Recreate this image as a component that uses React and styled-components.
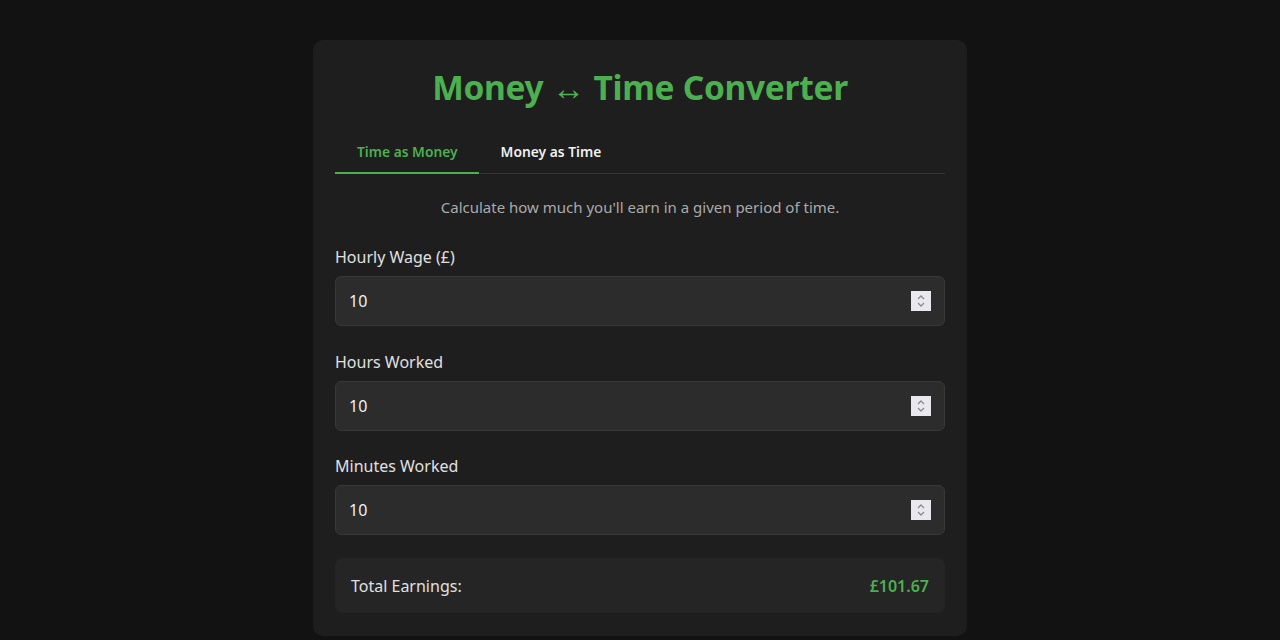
import React, { useState } from "react";
import styled, { createGlobalStyle } from "styled-components";

const Global = createGlobalStyle`
  html, body { margin: 0; padding: 0; background: #121212; }
  body { font-family: "Noto Sans", "Open Sans", sans-serif; color: #e0e0e0; }
  * { box-sizing: border-box; }
`;

const Page = styled.div`
  display: flex;
  justify-content: center;
  padding-top: 40px;
  min-height: 640px;
`;

const Card = styled.div`
  width: 654px;
  background: #1e1e1e;
  border-radius: 10px;
  padding: 22px 22px 23px;
  align-self: flex-start;
`;

const Title = styled.h1`
  margin: 3px 0 23px;
  text-align: center;
  color: #4caf50;
  font-size: 33.5px;
  font-weight: 700;
  line-height: 44px;
  letter-spacing: -0.3px;
`;

const Tabs = styled.div`
  display: flex;
  border-bottom: 1px solid #333;
`;

const Tab = styled.button`
  background: none;
  border: none;
  font-family: inherit;
  font-size: 13.8px;
  font-weight: 600;
  padding: 10px 21px 11px 22px;
  color: ${(p) => (p.$active ? "#4caf50" : "#f0f0f0")};
  border-bottom: 2px solid ${(p) => (p.$active ? "#4caf50" : "transparent")};
  margin-bottom: -1px;
  cursor: pointer;
`;

const Description = styled.p`
  margin: 23px 0 30px;
  text-align: center;
  color: #aaa;
  font-size: 15px;
  line-height: 20px;
`;

const Field = styled.div`
  display: flex;
  flex-direction: column;
  gap: 9px;
  margin-bottom: 25.5px;
`;

const Label = styled.label`
  font-size: 16px;
  color: #e0e0e0;
  line-height: 20px;
`;

const InputBox = styled.div`
  display: flex;
  align-items: center;
  height: 50px;
  background: #2c2c2c;
  border: 1px solid #383838;
  border-radius: 6px;
  padding: 0 13px;
`;

const Input = styled.input`
  flex: 1;
  background: transparent;
  border: none;
  outline: none;
  color: #f0f0f0;
  font-family: inherit;
  font-size: 16px;
  padding: 0;
  &::-webkit-inner-spin-button, &::-webkit-outer-spin-button { -webkit-appearance: none; margin: 0; }
  -moz-appearance: textfield;
`;

const Spinner = styled.div`
  width: 20px;
  height: 20px;
  background: #e9e9ed;
  display: flex;
  align-items: center;
  justify-content: center;
`;

const Result = styled.div`
  display: flex;
  justify-content: space-between;
  align-items: center;
  background: #252525;
  border-radius: 8px;
  padding: 0 16px;
  height: 55px;
  margin-top: -2.5px;
`;

const ResultLabel = styled.span`
  font-size: 16px;
  color: #e0e0e0;
`;

const ResultValue = styled.span`
  font-size: 16px;
  font-weight: 600;
  color: #4caf50;
`;

const SpinIcon = () => (
  <svg width="10" height="16" viewBox="0 0 10 16" fill="none" stroke="#8a8a96" strokeWidth="1.3">
    <polyline points="2,6 5,3 8,6" />
    <polyline points="2,10 5,13 8,10" />
  </svg>
);

const NumberField = ({ label, value, onChange }) => (
  <Field>
    <Label>{label}</Label>
    <InputBox>
      <Input type="number" value={value} onChange={(e) => onChange(e.target.value)} />
      <Spinner>
        <SpinIcon />
      </Spinner>
    </InputBox>
  </Field>
);

export default function App() {
  const [tab, setTab] = useState(0);
  const [wage, setWage] = useState("10");
  const [hours, setHours] = useState("10");
  const [mins, setMins] = useState("10");
  const total = (parseFloat(wage) || 0) * ((parseFloat(hours) || 0) + (parseFloat(mins) || 0) / 60);

  return (
    <>
      <Global />
      <Page>
        <Card>
          <Title>Money ↔ Time Converter</Title>
          <Tabs>
            <Tab $active={tab === 0} onClick={() => setTab(0)}>Time as Money</Tab>
            <Tab $active={tab === 1} onClick={() => setTab(1)}>Money as Time</Tab>
          </Tabs>
          <Description>Calculate how much you'll earn in a given period of time.</Description>
          <NumberField label="Hourly Wage (£)" value={wage} onChange={setWage} />
          <NumberField label="Hours Worked" value={hours} onChange={setHours} />
          <NumberField label="Minutes Worked" value={mins} onChange={setMins} />
          <Result>
            <ResultLabel>Total Earnings:</ResultLabel>
            <ResultValue>£{total.toFixed(2)}</ResultValue>
          </Result>
        </Card>
      </Page>
    </>
  );
}
